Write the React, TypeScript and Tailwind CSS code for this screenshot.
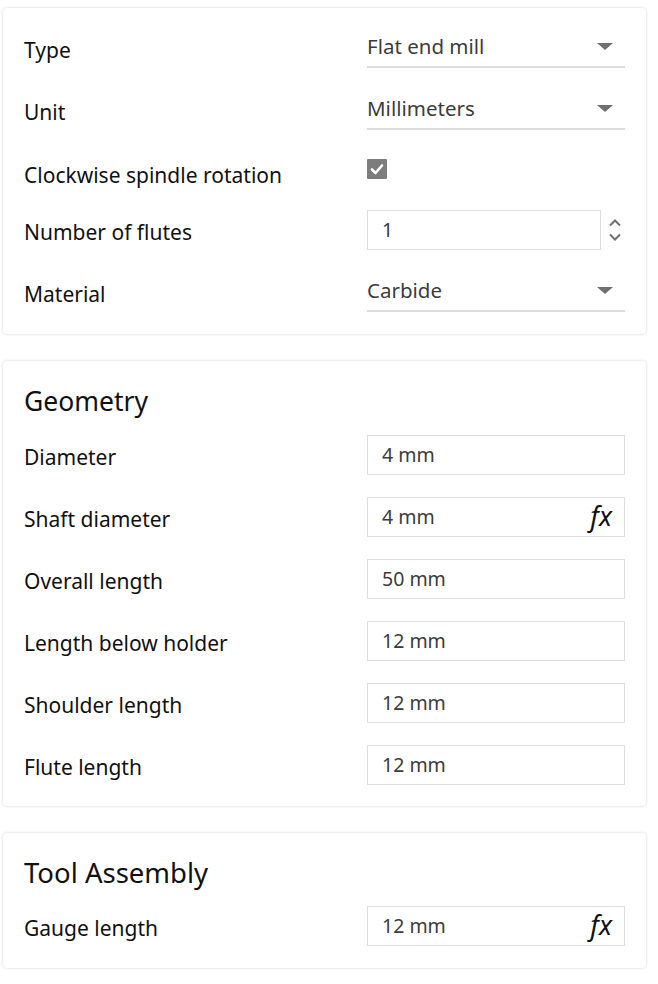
import React from "react";

const font = { fontFamily: '"Noto Sans", "Open Sans", sans-serif' };

function Caret() {
  return (
    <svg width="16" height="8" viewBox="0 0 16 8" className="mr-[12px]">
      <path d="M0 0 L16 0 L8 7 Z" fill="#6f6f6f" />
    </svg>
  );
}

function Label({ children, extra = "" }: { children: React.ReactNode; extra?: string }) {
  return (
    <div className={`w-[343px] shrink-0 pt-[4px] text-[21px] leading-[24px] text-[#111] ${extra}`}>{children}</div>
  );
}

function SelectRow({ label, value }: { label: string; value: string }) {
  return (
    <div className="flex items-center h-[40px]">
      <Label>{label}</Label>
      <div className="w-[258px] h-[40px] flex items-center justify-between border-b-2 border-[#dcdcdc]">
        <span className="text-[20.5px] text-[#3c3c3c] leading-[24px] -mt-[2px]">{value}</span>
        <Caret />
      </div>
    </div>
  );
}

function FxIcon() {
  return (
    <span className="italic text-[27px] leading-none text-[#111] mr-[12px] -mt-[3px]" style={{ fontFamily: '"Noto Sans", sans-serif' }}>
      fx
    </span>
  );
}

function InputRow({ label, value, fx = false }: { label: string; value: string; fx?: boolean }) {
  return (
    <div className="flex items-center h-[40px]">
      <Label>{label}</Label>
      <div className="w-[258px] h-[40px] flex items-center justify-between border border-[#dedede] bg-white pl-[14px]">
        <span className="text-[19.5px] text-[#3c3c3c] leading-[24px]">{value}</span>
        {fx && <FxIcon />}
      </div>
    </div>
  );
}

function Card({ children, className = "" }: { children: React.ReactNode; className?: string }) {
  return (
    <div className={`ml-[3px] w-[643px] bg-white rounded-[4px] shadow-[0_0_3px_rgba(0,0,0,0.18)] px-[21px] ${className}`}>
      {children}
    </div>
  );
}

export default function App() {
  return (
    <div className="w-[658px] h-[984px] bg-white pt-[8px] flex flex-col gap-[27px]" style={font}>
      <Card className="pt-[20px] pb-[22px] flex flex-col gap-[22px]">
        <SelectRow label="Type" value="Flat end mill" />
        <SelectRow label="Unit" value="Millimeters" />
        <div className="flex items-start h-[36px]">
          <Label extra="pt-[11px]">Clockwise spindle rotation</Label>
          <div className="mt-[7px] w-[20px] h-[20px] rounded-[1px] bg-[#7d7d7d] flex items-center justify-center">
            <svg width="14" height="12" viewBox="0 0 14 12">
              <path d="M2 6.5 L5.5 10 L12 2.5" stroke="#fff" strokeWidth="2.6" fill="none" strokeLinecap="round" strokeLinejoin="round" />
            </svg>
          </div>
        </div>
        <div className="flex items-center h-[40px]">
          <Label>Number of flutes</Label>
          <div className="w-[234px] h-[40px] flex items-center border border-[#dedede] pl-[14px]">
            <span className="text-[19.5px] text-[#3c3c3c] leading-[24px]">1</span>
          </div>
          <div className="ml-[7px] flex flex-col items-center gap-[6px]">
            <svg width="14" height="9" viewBox="0 0 14 9">
              <path d="M2 7.5 L7 2.5 L12 7.5" stroke="#707070" strokeWidth="2" fill="none" />
            </svg>
            <svg width="14" height="9" viewBox="0 0 14 9">
              <path d="M2 1.5 L7 6.5 L12 1.5" stroke="#707070" strokeWidth="2" fill="none" />
            </svg>
          </div>
        </div>
        <SelectRow label="Material" value="Carbide" />
      </Card>

      <Card className="pt-[24px] pb-[21px]">
        <div className="text-[26.5px] leading-[32px] text-[#111] mb-[18px]">Geometry</div>
        <div className="flex flex-col gap-[22px]">
          <InputRow label="Diameter" value="4 mm" />
          <InputRow label="Shaft diameter" value="4 mm" fx />
          <InputRow label="Overall length" value="50 mm" />
          <InputRow label="Length below holder" value="12 mm" />
          <InputRow label="Shoulder length" value="12 mm" />
          <InputRow label="Flute length" value="12 mm" />
        </div>
      </Card>

      <Card className="pt-[24px] pb-[22px]">
        <div className="text-[27.5px] leading-[32px] text-[#111] mb-[17px]">Tool Assembly</div>
        <InputRow label="Gauge length" value="12 mm" fx />
      </Card>
    </div>
  );
}
